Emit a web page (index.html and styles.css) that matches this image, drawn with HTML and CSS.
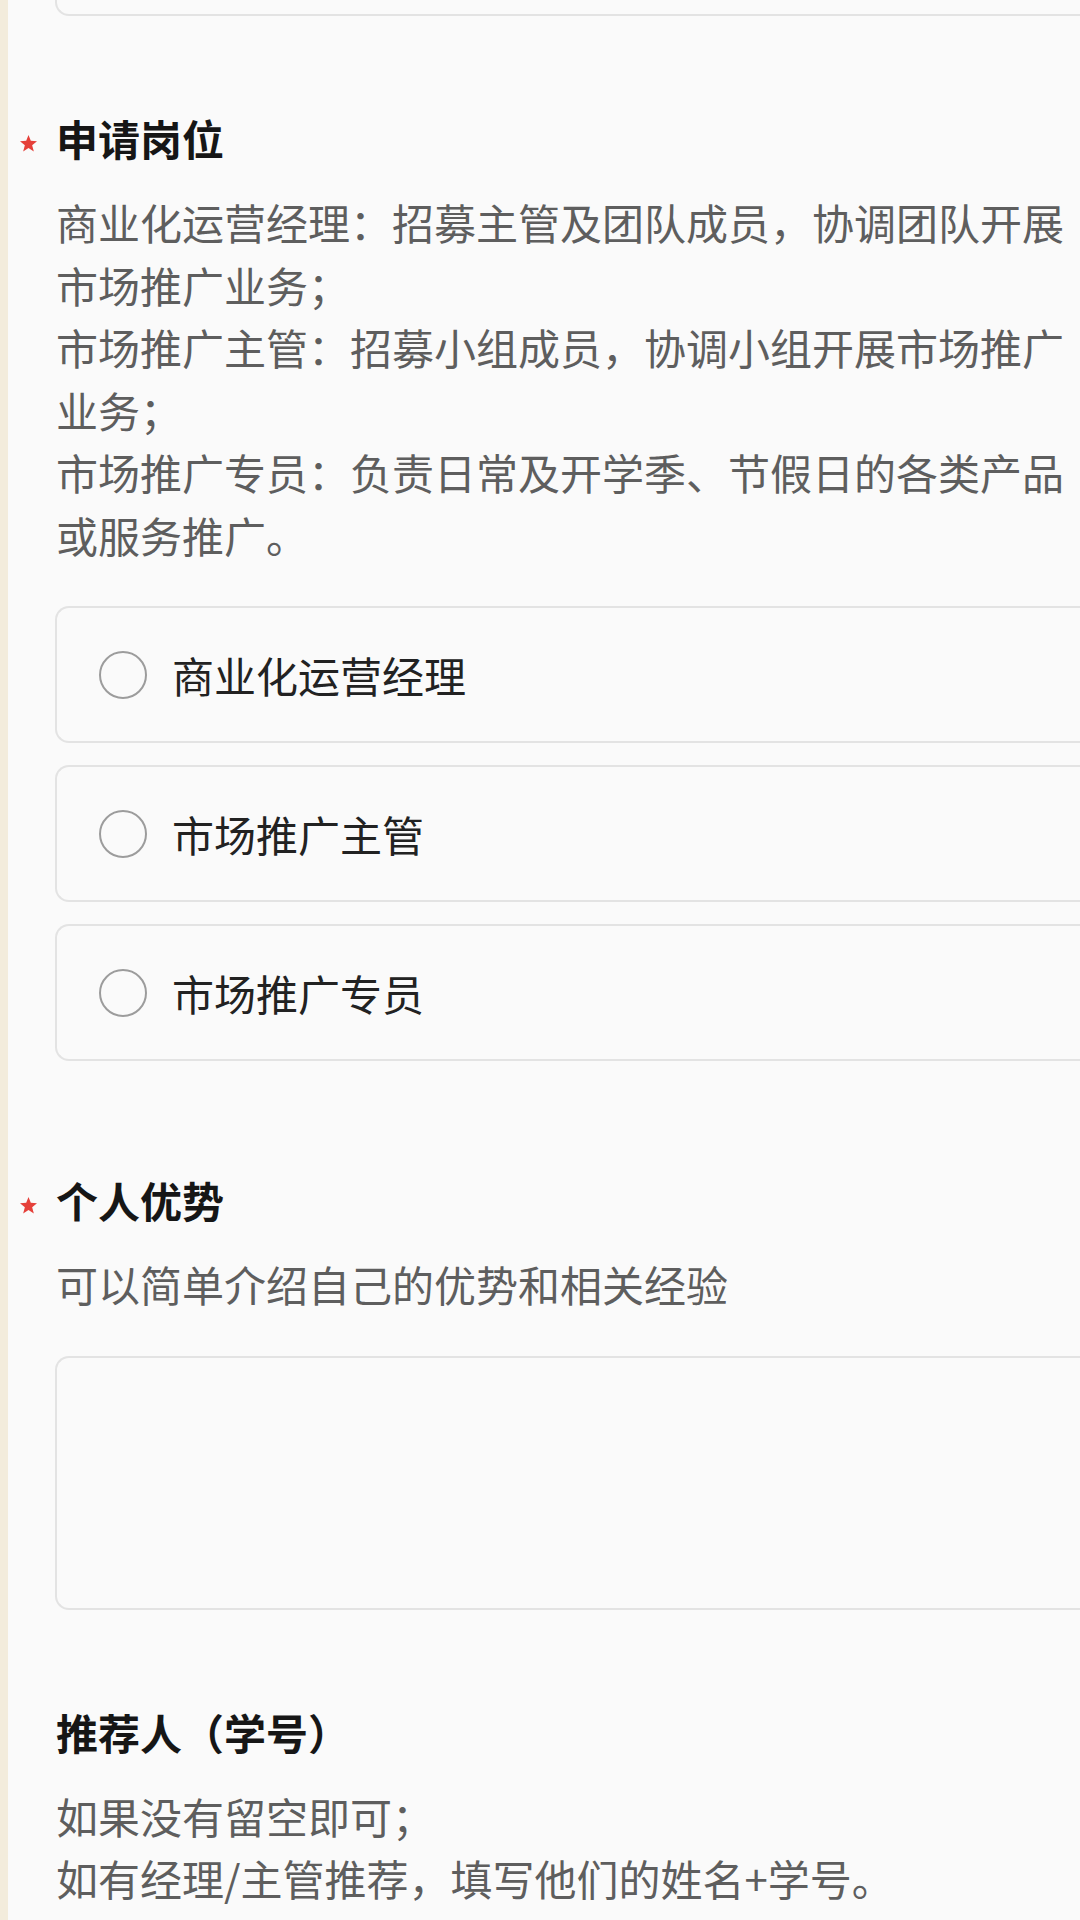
FILE: index.html
```html
<!DOCTYPE html>
<html lang="zh-CN">
<head>
<meta charset="utf-8">
<title>申请表</title>
<link rel="stylesheet" href="styles.css">
</head>
<body>
<div class="page">
  <div class="prev-box"></div>

  <section class="field">
    <h2 class="label required"><span class="star"><svg viewBox="0 0 14 14" width="17" height="17"><polygon points="7,0 8.9,4.8 14,5.1 10,8.4 11.4,13.6 7,10.7 2.6,13.6 4,8.4 0,5.1 5.1,4.8" fill="#e5403a"/></svg></span>申请岗位</h2>
    <p class="desc">商业化运营经理：招募主管及团队成员，协调团队开展市场推广业务；<br>市场推广主管：招募小组成员，协调小组开展市场推广业务；<br>市场推广专员：负责日常及开学季、节假日的各类产品或服务推广。</p>
    <div class="options">
      <div class="option"><span class="radio"></span><span class="opt-text">商业化运营经理</span></div>
      <div class="option"><span class="radio"></span><span class="opt-text">市场推广主管</span></div>
      <div class="option"><span class="radio"></span><span class="opt-text">市场推广专员</span></div>
    </div>
  </section>

  <section class="field field-after-options">
    <h2 class="label required"><span class="star"><svg viewBox="0 0 14 14" width="17" height="17"><polygon points="7,0 8.9,4.8 14,5.1 10,8.4 11.4,13.6 7,10.7 2.6,13.6 4,8.4 0,5.1 5.1,4.8" fill="#e5403a"/></svg></span>个人优势</h2>
    <p class="desc">可以简单介绍自己的优势和相关经验</p>
    <div class="textarea"></div>
  </section>

  <section class="field">
    <h2 class="label">推荐人（学号）</h2>
    <p class="desc">如果没有留空即可；<br>如有经理/主管推荐，填写他们的姓名+学号。</p>
  </section>
</div>
</body>
</html>
```

FILE: styles.css
```css
html, body {
  margin: 0;
  padding: 0;
}
body {
  background: #fafafa;
  font-family: "Noto Sans CJK SC", "Noto Sans", sans-serif;
  overflow: hidden;
  height: 1920px;
}
.page {
  display: flow-root;
  border-left: 8px solid #f3ecdc;
  height: 1920px;
  padding-left: 47px;
  width: 1020px;
  box-sizing: content-box;
}
.prev-box,
.option,
.textarea {
  border: 2px solid #e3e3e3;
  border-right: none;
  border-radius: 14px 0 0 14px;
  margin-right: -5px;
  box-sizing: border-box;
}
.prev-box {
  height: 60px;
  margin-top: -44px;
}
.field {
  margin-top: 93px;
}
.field-after-options {
  margin-top: 110px;
}
.label {
  position: relative;
  margin: 0;
  font-size: 42px;
  line-height: 58px;
  font-weight: 700;
  color: #161616;
  padding-left: 1px;
}
.star {
  position: absolute;
  left: -35px;
  top: 26px;
  width: 17px;
  height: 17px;
  display: block;
}
.star svg {
  display: block;
}
.desc {
  margin: 24px 0 0 0;
  font-size: 42px;
  line-height: 62.5px;
  color: #5e5e5e;
  font-weight: 400;
  padding-left: 1px;
}
.options {
  margin-top: 40px;
  display: flex;
  flex-direction: column;
  gap: 22px;
}
.option {
  height: 137px;
  display: flex;
  align-items: center;
  padding-left: 42px;
  gap: 25px;
}
.radio {
  width: 48px;
  height: 48px;
  box-sizing: border-box;
  border: 2.5px solid #9c9c9c;
  border-radius: 50%;
  flex: none;
}
.opt-text {
  font-size: 42px;
  line-height: 58px;
  color: #222222;
}
.textarea {
  margin-top: 40px;
  height: 254px;
}
```
